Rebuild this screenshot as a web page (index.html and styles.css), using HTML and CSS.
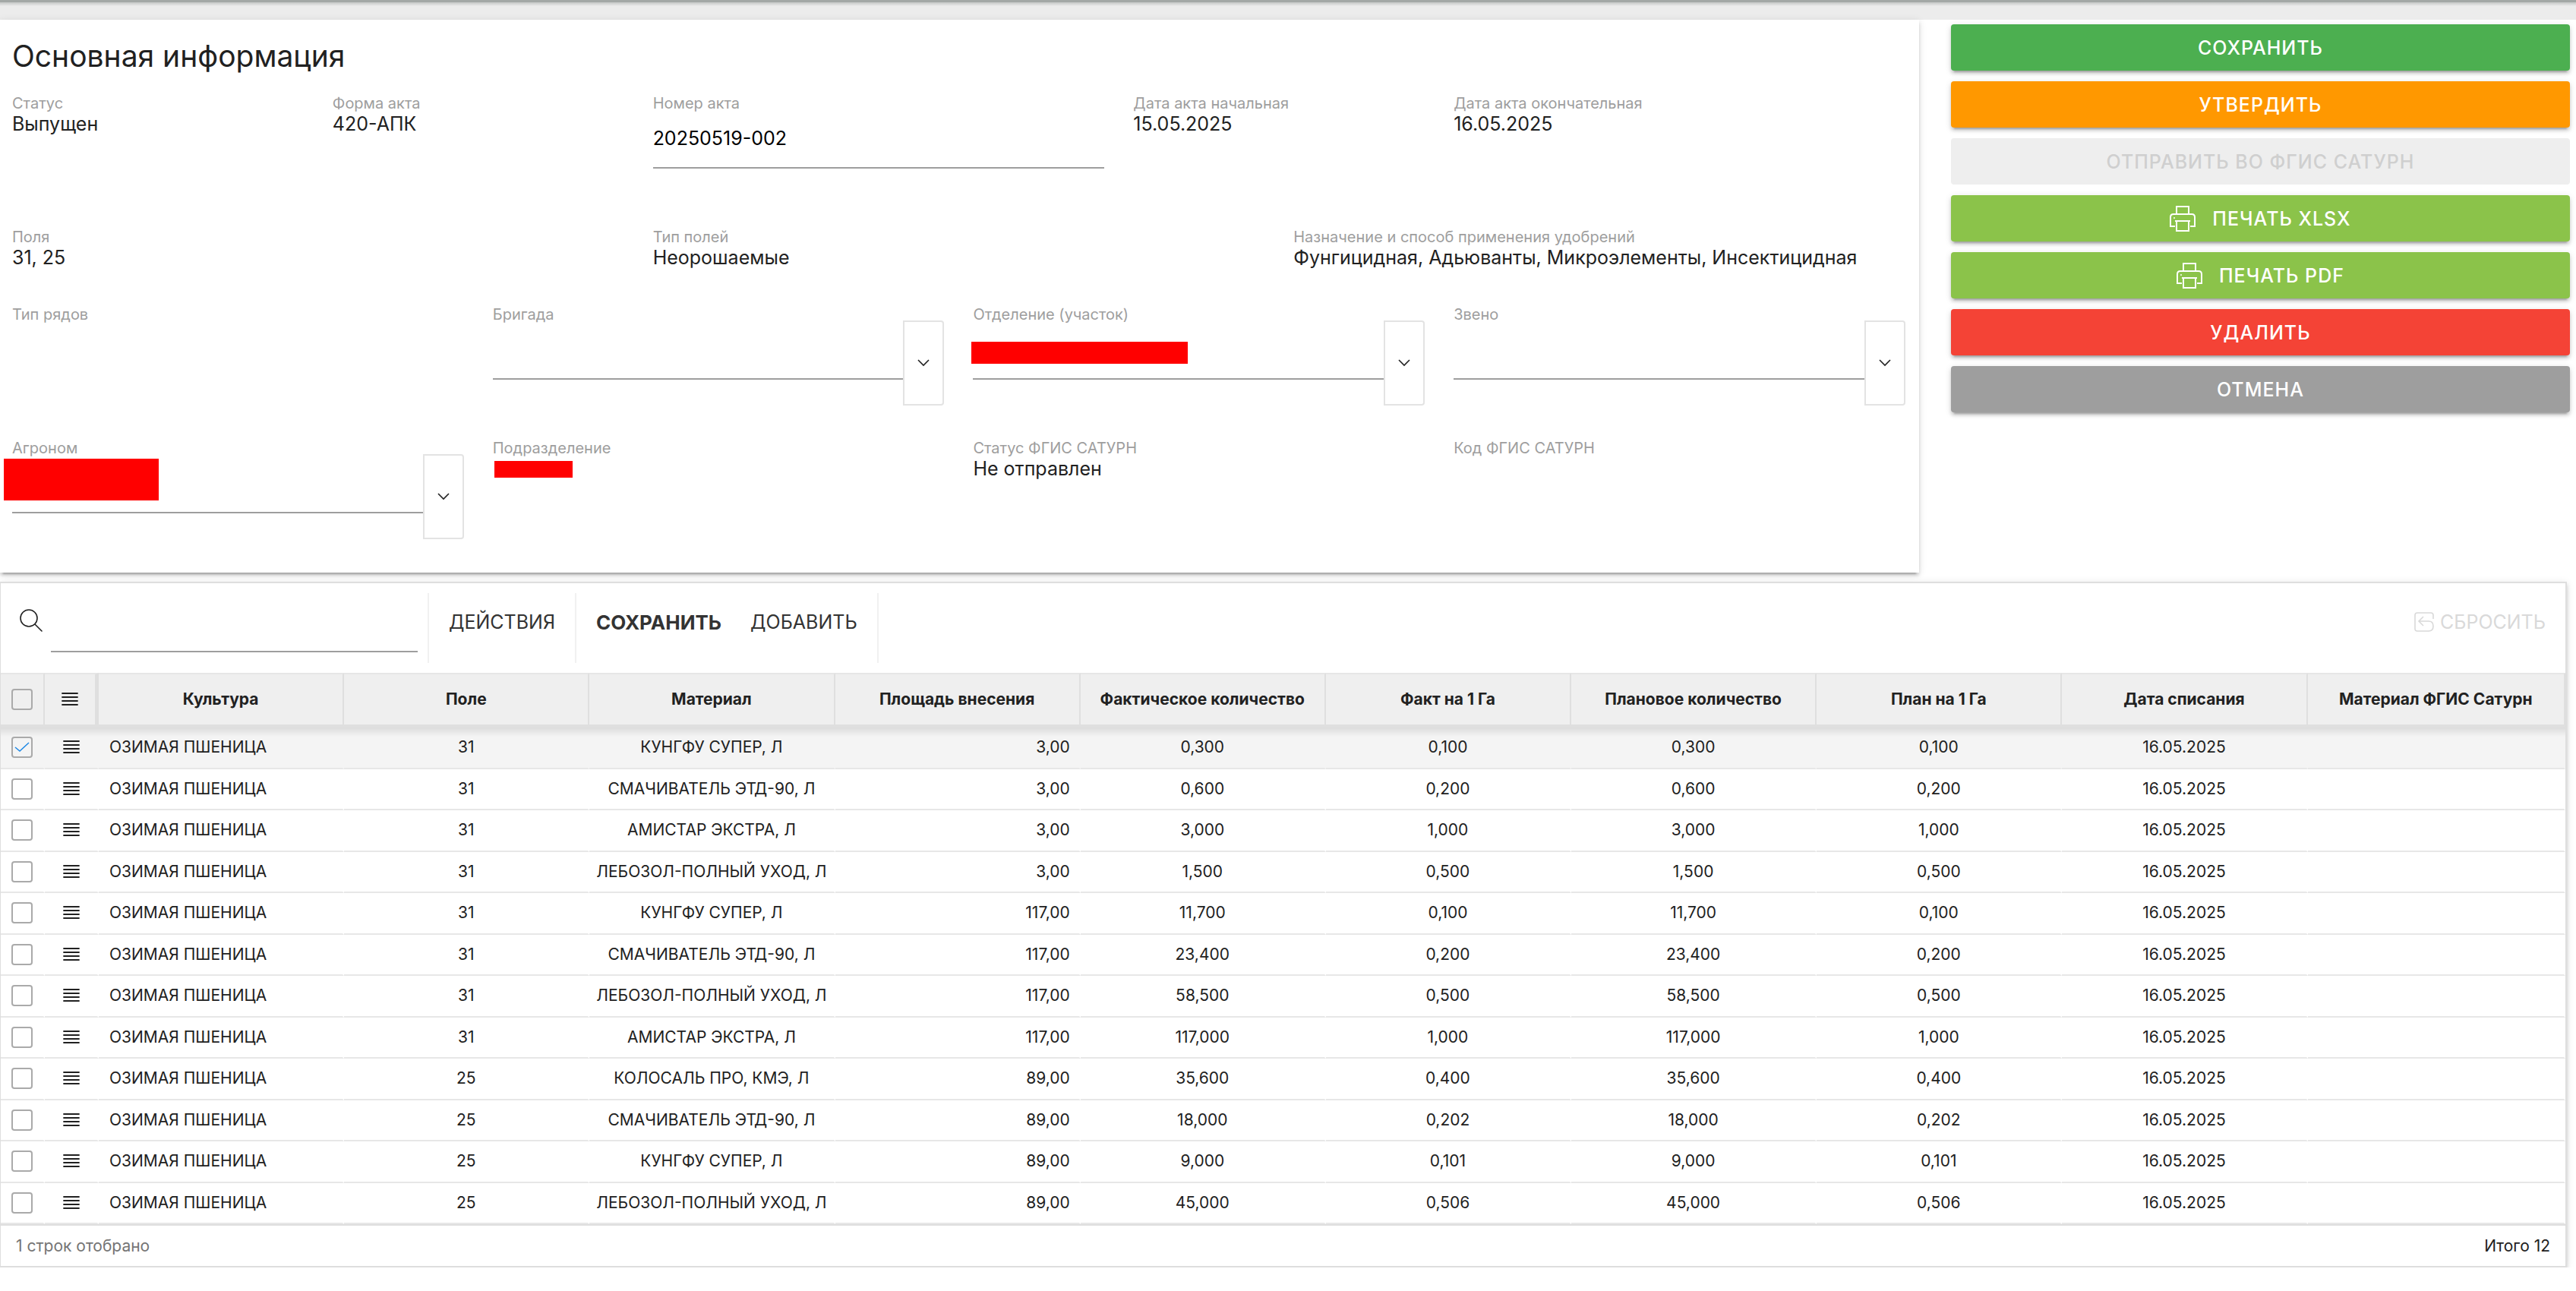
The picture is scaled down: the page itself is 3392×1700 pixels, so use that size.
FILE: index.html
```
<!DOCTYPE html>
<html lang="ru">
<head>
  <meta charset="UTF-8">
  <meta name="viewport" content="width=device-width, initial-scale=1.0">
  <title>Основная информация</title>
  <link rel="stylesheet" href="styles.css">
</head>
<body>

<!-- Иконки -->
<svg class="sprite" aria-hidden="true">
  <symbol id="icon-print" viewBox="0 0 34 34">
    <path d="M9 12V1h16v11M7 27H1V15q0-4 4-4h24q4 0 4 4v12h-6M9 20v13h16V20M7 20h20" fill="none" stroke="currentColor" stroke-width="2"/>
    <circle cx="6" cy="16" r="1" fill="currentColor"/>
  </symbol>
  <symbol id="icon-chevron" viewBox="0 0 16 10">
    <path d="M1 1l7 7 7-7" fill="none" stroke="currentColor" stroke-width="1.6"/>
  </symbol>
  <symbol id="icon-rows" viewBox="0 0 22 20">
    <path d="M1 2h20M1 7h20M1 12h20M1 17h20" fill="none" stroke="currentColor" stroke-width="1.8" stroke-linecap="round"/>
  </symbol>
  <symbol id="icon-search" viewBox="0 0 30 30">
    <path d="M20 20l9 9" stroke="currentColor" stroke-width="1.6" stroke-linecap="round"/>
    <circle cx="12" cy="12" r="11" fill="none" stroke="currentColor" stroke-width="1.6"/>
  </symbol>
  <symbol id="icon-reset" viewBox="0 0 26 26">
    <path d="M25 9V4q0-3-3-3H4Q1 1 1 4v18q0 3 3 3h15q6 0 6-6.500T19 12H7M12 6l-6 6 6 6" fill="none" stroke="currentColor" stroke-width="1.6"/>
  </symbol>
</svg>

<header class="topbar"></header>

<main>
  <div class="layout">
    <section class="card">
      <h1>Основная информация</h1>
      <form class="form">
        <div class="field col-2">
          <span class="label">Статус</span>
          <span class="value">Выпущен</span>
        </div>
        <div class="field col-2">
          <span class="label">Форма акта</span>
          <span class="value">420-АПК</span>
        </div>
        <div class="field col-3">
          <label class="label" for="act-number">Номер акта</label>
          <input class="input" type="text" id="act-number" value="20250519-002">
        </div>
        <div class="field col-2">
          <span class="label">Дата акта начальная</span>
          <span class="value">15.05.2025</span>
        </div>
        <div class="field col-3">
          <span class="label">Дата акта окончательная</span>
          <span class="value">16.05.2025</span>
        </div>

        <div class="field short col-4">
          <span class="label">Поля</span>
          <span class="value">31, 25</span>
        </div>
        <div class="field short col-4">
          <span class="label">Тип полей</span>
          <span class="value">Неорошаемые</span>
        </div>
        <div class="field short col-4">
          <span class="label">Назначение и способ применения удобрений</span>
          <span class="value">Фунгицидная, Адьюванты, Микроэлементы, Инсектицидная</span>
        </div>

        <div class="field col-3">
          <span class="label">Тип рядов</span>
        </div>
        <div class="field combo col-3">
          <label class="label" for="brigade">Бригада</label>
          <input class="input" type="text" id="brigade">
          <button class="combo-btn" type="button" aria-label="Выбрать бригаду"><svg><use href="#icon-chevron"/></svg></button>
        </div>
        <div class="field combo col-3">
          <label class="label" for="department">Отделение (участок)</label>
          <input class="input" type="text" id="department">
          <button class="combo-btn" type="button" aria-label="Выбрать отделение"><svg><use href="#icon-chevron"/></svg></button>
          <span class="mask mask-department"></span>
        </div>
        <div class="field combo col-3">
          <label class="label" for="unit">Звено</label>
          <input class="input" type="text" id="unit">
          <button class="combo-btn" type="button" aria-label="Выбрать звено"><svg><use href="#icon-chevron"/></svg></button>
        </div>

        <div class="field combo col-3">
          <label class="label" for="agronomist">Агроном</label>
          <input class="input" type="text" id="agronomist">
          <button class="combo-btn" type="button" aria-label="Выбрать агронома"><svg><use href="#icon-chevron"/></svg></button>
          <span class="mask mask-agronomist"></span>
        </div>
        <div class="field col-3">
          <span class="label">Подразделение</span>
          <span class="mask mask-division"></span>
        </div>
        <div class="field col-3">
          <span class="label">Статус ФГИС САТУРН</span>
          <span class="value">Не отправлен</span>
        </div>
        <div class="field col-3">
          <span class="label">Код ФГИС САТУРН</span>
        </div>
      </form>
    </section>

    <aside class="actions">
      <button class="btn green" type="button">СОХРАНИТЬ</button>
      <button class="btn orange" type="button">УТВЕРДИТЬ</button>
      <button class="btn" type="button" disabled>ОТПРАВИТЬ ВО ФГИС САТУРН</button>
      <button class="btn lime" type="button"><svg><use href="#icon-print"/></svg>ПЕЧАТЬ XLSX</button>
      <button class="btn lime" type="button"><svg><use href="#icon-print"/></svg>ПЕЧАТЬ PDF</button>
      <button class="btn red" type="button">УДАЛИТЬ</button>
      <button class="btn gray" type="button">ОТМЕНА</button>
    </aside>
  </div>

  <section class="grid-panel">
    <div class="toolbar">
      <div class="search">
        <label for="search" aria-label="Поиск"><svg><use href="#icon-search"/></svg></label>
        <input type="search" id="search">
      </div>
      <div class="tool-group">
        <button class="tool" type="button">ДЕЙСТВИЯ</button>
      </div>
      <div class="tool-group">
        <button class="tool strong" type="button">СОХРАНИТЬ</button>
        <button class="tool" type="button">ДОБАВИТЬ</button>
      </div>
      <button class="tool reset" type="button" disabled><svg><use href="#icon-reset"/></svg>СБРОСИТЬ</button>
    </div>

    <table>
      <colgroup>
        <col class="c-check">
        <col class="c-menu">
        <col class="c-data" span="9">
        <col>
      </colgroup>
      <thead>
        <tr>
          <th><input type="checkbox" aria-label="Выбрать все"></th>
          <th class="menu-head"><button class="row-menu" type="button" aria-label="Меню таблицы"><svg><use href="#icon-rows"/></svg></button></th>
          <th>Культура</th>
          <th>Поле</th>
          <th>Материал</th>
          <th>Площадь внесения</th>
          <th>Фактическое количество</th>
          <th>Факт на 1 Га</th>
          <th>Плановое количество</th>
          <th>План на 1 Га</th>
          <th>Дата списания</th>
          <th>Материал ФГИС Сатурн</th>
        </tr>
      </thead>
      <tbody>
        <tr class="selected">
          <td><input type="checkbox" aria-label="Строка 1" checked></td>
          <td><button class="row-menu" type="button" aria-label="Меню строки 1"><svg><use href="#icon-rows"/></svg></button></td>
          <td class="left">ОЗИМАЯ ПШЕНИЦА</td>
          <td>31</td>
          <td>КУНГФУ СУПЕР, Л</td>
          <td class="right">3,00</td>
          <td>0,300</td>
          <td>0,100</td>
          <td>0,300</td>
          <td>0,100</td>
          <td>16.05.2025</td>
          <td></td>
        </tr>
        <tr>
          <td><input type="checkbox" aria-label="Строка 2"></td>
          <td><button class="row-menu" type="button" aria-label="Меню строки 2"><svg><use href="#icon-rows"/></svg></button></td>
          <td class="left">ОЗИМАЯ ПШЕНИЦА</td>
          <td>31</td>
          <td>СМАЧИВАТЕЛЬ ЭТД-90, Л</td>
          <td class="right">3,00</td>
          <td>0,600</td>
          <td>0,200</td>
          <td>0,600</td>
          <td>0,200</td>
          <td>16.05.2025</td>
          <td></td>
        </tr>
        <tr>
          <td><input type="checkbox" aria-label="Строка 3"></td>
          <td><button class="row-menu" type="button" aria-label="Меню строки 3"><svg><use href="#icon-rows"/></svg></button></td>
          <td class="left">ОЗИМАЯ ПШЕНИЦА</td>
          <td>31</td>
          <td>АМИСТАР ЭКСТРА, Л</td>
          <td class="right">3,00</td>
          <td>3,000</td>
          <td>1,000</td>
          <td>3,000</td>
          <td>1,000</td>
          <td>16.05.2025</td>
          <td></td>
        </tr>
        <tr>
          <td><input type="checkbox" aria-label="Строка 4"></td>
          <td><button class="row-menu" type="button" aria-label="Меню строки 4"><svg><use href="#icon-rows"/></svg></button></td>
          <td class="left">ОЗИМАЯ ПШЕНИЦА</td>
          <td>31</td>
          <td>ЛЕБОЗОЛ-ПОЛНЫЙ УХОД, Л</td>
          <td class="right">3,00</td>
          <td>1,500</td>
          <td>0,500</td>
          <td>1,500</td>
          <td>0,500</td>
          <td>16.05.2025</td>
          <td></td>
        </tr>
        <tr>
          <td><input type="checkbox" aria-label="Строка 5"></td>
          <td><button class="row-menu" type="button" aria-label="Меню строки 5"><svg><use href="#icon-rows"/></svg></button></td>
          <td class="left">ОЗИМАЯ ПШЕНИЦА</td>
          <td>31</td>
          <td>КУНГФУ СУПЕР, Л</td>
          <td class="right">117,00</td>
          <td>11,700</td>
          <td>0,100</td>
          <td>11,700</td>
          <td>0,100</td>
          <td>16.05.2025</td>
          <td></td>
        </tr>
        <tr>
          <td><input type="checkbox" aria-label="Строка 6"></td>
          <td><button class="row-menu" type="button" aria-label="Меню строки 6"><svg><use href="#icon-rows"/></svg></button></td>
          <td class="left">ОЗИМАЯ ПШЕНИЦА</td>
          <td>31</td>
          <td>СМАЧИВАТЕЛЬ ЭТД-90, Л</td>
          <td class="right">117,00</td>
          <td>23,400</td>
          <td>0,200</td>
          <td>23,400</td>
          <td>0,200</td>
          <td>16.05.2025</td>
          <td></td>
        </tr>
        <tr>
          <td><input type="checkbox" aria-label="Строка 7"></td>
          <td><button class="row-menu" type="button" aria-label="Меню строки 7"><svg><use href="#icon-rows"/></svg></button></td>
          <td class="left">ОЗИМАЯ ПШЕНИЦА</td>
          <td>31</td>
          <td>ЛЕБОЗОЛ-ПОЛНЫЙ УХОД, Л</td>
          <td class="right">117,00</td>
          <td>58,500</td>
          <td>0,500</td>
          <td>58,500</td>
          <td>0,500</td>
          <td>16.05.2025</td>
          <td></td>
        </tr>
        <tr>
          <td><input type="checkbox" aria-label="Строка 8"></td>
          <td><button class="row-menu" type="button" aria-label="Меню строки 8"><svg><use href="#icon-rows"/></svg></button></td>
          <td class="left">ОЗИМАЯ ПШЕНИЦА</td>
          <td>31</td>
          <td>АМИСТАР ЭКСТРА, Л</td>
          <td class="right">117,00</td>
          <td>117,000</td>
          <td>1,000</td>
          <td>117,000</td>
          <td>1,000</td>
          <td>16.05.2025</td>
          <td></td>
        </tr>
        <tr>
          <td><input type="checkbox" aria-label="Строка 9"></td>
          <td><button class="row-menu" type="button" aria-label="Меню строки 9"><svg><use href="#icon-rows"/></svg></button></td>
          <td class="left">ОЗИМАЯ ПШЕНИЦА</td>
          <td>25</td>
          <td>КОЛОСАЛЬ ПРО, КМЭ, Л</td>
          <td class="right">89,00</td>
          <td>35,600</td>
          <td>0,400</td>
          <td>35,600</td>
          <td>0,400</td>
          <td>16.05.2025</td>
          <td></td>
        </tr>
        <tr>
          <td><input type="checkbox" aria-label="Строка 10"></td>
          <td><button class="row-menu" type="button" aria-label="Меню строки 10"><svg><use href="#icon-rows"/></svg></button></td>
          <td class="left">ОЗИМАЯ ПШЕНИЦА</td>
          <td>25</td>
          <td>СМАЧИВАТЕЛЬ ЭТД-90, Л</td>
          <td class="right">89,00</td>
          <td>18,000</td>
          <td>0,202</td>
          <td>18,000</td>
          <td>0,202</td>
          <td>16.05.2025</td>
          <td></td>
        </tr>
        <tr>
          <td><input type="checkbox" aria-label="Строка 11"></td>
          <td><button class="row-menu" type="button" aria-label="Меню строки 11"><svg><use href="#icon-rows"/></svg></button></td>
          <td class="left">ОЗИМАЯ ПШЕНИЦА</td>
          <td>25</td>
          <td>КУНГФУ СУПЕР, Л</td>
          <td class="right">89,00</td>
          <td>9,000</td>
          <td>0,101</td>
          <td>9,000</td>
          <td>0,101</td>
          <td>16.05.2025</td>
          <td></td>
        </tr>
        <tr>
          <td><input type="checkbox" aria-label="Строка 12"></td>
          <td><button class="row-menu" type="button" aria-label="Меню строки 12"><svg><use href="#icon-rows"/></svg></button></td>
          <td class="left">ОЗИМАЯ ПШЕНИЦА</td>
          <td>25</td>
          <td>ЛЕБОЗОЛ-ПОЛНЫЙ УХОД, Л</td>
          <td class="right">89,00</td>
          <td>45,000</td>
          <td>0,506</td>
          <td>45,000</td>
          <td>0,506</td>
          <td>16.05.2025</td>
          <td></td>
        </tr>
      </tbody>
    </table>

    <footer class="grid-footer">
      <span class="muted">1 строк отобрано</span>
      <span>Итого 12</span>
    </footer>
  </section>
</main>

</body>
</html>
```
FILE: styles.css
```
* {
  box-sizing: border-box;
}

body {
  margin: 0;
  font-family: Inter, "Liberation Sans", sans-serif;
  font-size: 21px;
  color: #212121;
  background-color: #fff;
}

button, input {
  font-family: inherit;
  color: inherit;
}

button {
  cursor: pointer;
}

.sprite {
  display: none;
}

/* Верхняя полоса */
.topbar {
  height: 26px;
  border-top: 3px solid #a3a8a6;
  background: linear-gradient(#c4c6c5, #ececec 5px);
}

/* Карточка и кнопки */
.layout {
  display: grid;
  grid-template-columns: 31fr 10fr;
  gap: 42px;
  padding-right: 8px;
}

.card, .grid-panel {
  background-color: #fff;
  box-shadow: 0 6px 2px -4px rgba(0, 0, 0, 0.2), 0 4px 4px rgba(0, 0, 0, 0.14), 0 2px 10px rgba(0, 0, 0, 0.12);
}

.card {
  padding: 18px 18px 0 16px;
}

h1 {
  margin: 0 0 20px;
  font-size: 39px;
  font-weight: 400;
  line-height: 60px;
}

.form {
  display: grid;
  grid-template-columns: repeat(12, 1fr);
  column-gap: 38px;
}

.field {
  position: relative;
  display: flex;
  flex-direction: column;
  min-height: 176px;
}

.field.short {
  min-height: 102px;
}

.col-2 { grid-column: span 2; }
.col-3 { grid-column: span 3; }
.col-4 { grid-column: span 4; }

.label {
  font-size: 20px;
  line-height: 24px;
  color: #9e9e9e;
  white-space: nowrap;
}

.value {
  font-size: 25px;
  line-height: 30px;
  white-space: nowrap;
}

.input {
  width: 100%;
  height: 74px;
  padding: 0 0 4px;
  border: none;
  border-bottom: 2px solid #9e9e9e;
  background: none;
  font-size: 25px;
  color: #000;
  outline: none;
}

.combo {
  display: grid;
  grid-template-columns: 1fr 54px;
  grid-template-rows: 24px 74px 34px;
}

.combo-btn {
  grid-column: 2;
  grid-row: 1 / 4;
  margin-top: 20px;
  padding: 0;
  border: 2px solid #e3e3e3;
  border-radius: 0 4px 4px 0;
  background-color: #fff;
}

.combo-btn svg {
  width: 16px;
  height: 10px;
}

/* Скрытые данные */
.mask {
  background-color: #f00;
}

.mask-department {
  position: absolute;
  top: 48px;
  left: -2px;
  width: 285px;
  height: 29px;
}

.mask-agronomist {
  position: absolute;
  top: 26px;
  left: -11px;
  width: 204px;
  height: 55px;
}

.mask-division {
  width: 103px;
  height: 22px;
  margin: 5px 2px;
}

.actions {
  display: flex;
  flex-direction: column;
  gap: 14px;
  padding-top: 6px;
}

.btn {
  display: flex;
  align-items: center;
  justify-content: center;
  gap: 22px;
  height: 61px;
  border: none;
  border-radius: 4px;
  color: #fff;
  font-size: 25px;
  font-weight: 500;
  letter-spacing: 1px;
  box-shadow: 0 6px 2px -4px rgba(0, 0, 0, 0.2), 0 4px 4px rgba(0, 0, 0, 0.14), 0 2px 10px rgba(0, 0, 0, 0.12);
}

.btn svg {
  width: 34px;
  height: 34px;
}

.btn:disabled {
  background-color: #eee;
  color: #cfcfcf;
  box-shadow: none;
  cursor: default;
}

.green { background-color: #4caf50; }
.orange { background-color: #ff9800; }
.lime { background-color: #8bc34a; }
.red { background-color: #f44336; }
.gray { background-color: #9e9e9e; }

/* Таблица */
.grid-panel {
  margin: 12px 12px 0 0;
  border: 2px solid #dedede;
  border-left-width: 1px;
}

.toolbar {
  display: flex;
  align-items: center;
  height: 118px;
  padding-right: 26px;
}

.search {
  display: flex;
  align-items: center;
  width: 562px;
  padding: 0 0 20px 25px;
}

.search svg {
  display: block;
  width: 30px;
  height: 30px;
}

.search input {
  width: 483px;
  height: 84px;
  margin-left: 11px;
  padding: 0;
  border: none;
  border-bottom: 2px solid #9e9e9e;
  background: none;
  font-size: 25px;
  outline: none;
  appearance: none;
}

.tool-group {
  display: flex;
  align-items: center;
  gap: 38px;
  height: 92px;
  padding: 0 26px 16px;
  border-left: 2px solid #f1f1f1;
}

.tool-group + .tool-group {
  border-right: 2px solid #f1f1f1;
}

.tool {
  display: flex;
  align-items: center;
  gap: 8px;
  padding: 0;
  border: none;
  background: none;
  font-size: 25px;
  color: #333;
}

.tool.strong {
  font-size: 26px;
  font-weight: 700;
}

.tool.reset {
  margin-left: auto;
  padding-bottom: 16px;
  color: #d9d9d9;
}

.tool.reset svg {
  width: 26px;
  height: 26px;
}

table {
  width: 100%;
  height: 726px;
  table-layout: fixed;
  border-collapse: separate;
  border-spacing: 0;
}

.c-check { width: 58px; }
.c-menu { width: 71px; }
.c-data { width: 9.57%; }

th, td {
  padding: 0;
  text-align: center;
  white-space: nowrap;
  line-height: 24px;
}

th {
  height: 72px;
  border-top: 2px solid #e6e6e6;
  border-right: 2px solid #dfdfdf;
  border-bottom: 4px solid #dfdfdf;
  background-color: #efefef;
  font-weight: 700;
}

.menu-head {
  border-right-width: 5px;
}

td {
  height: 54px;
  border-right: 2px solid transparent;
  border-bottom: 2px solid #e7e7e7;
}

.selected td {
  background-color: #f4f4f4;
}

/* Тень под шапкой */
tbody tr:first-child td {
  background-image: linear-gradient(#dcdcdc, #f4f4f4 12px);
}

.left {
  padding-left: 14px;
  text-align: left;
}

.right {
  padding-right: 12px;
  text-align: right;
}

input[type="checkbox"] {
  appearance: none;
  display: block;
  width: 28px;
  height: 28px;
  margin: 0 0 0 14px;
  border: 2px solid #aaa;
  border-radius: 4px;
  background-color: #fff;
}

th input[type="checkbox"] {
  background: none;
}

input[type="checkbox"]:checked {
  background-color: transparent;
  background-image: url("data:image/svg+xml,%3Csvg xmlns='http://www.w3.org/2000/svg' viewBox='0 0 24 24'%3E%3Cpath d='M3 12l6 5L21 6' fill='none' stroke='%231e88e5' stroke-width='1.500'/%3E%3C/svg%3E");
}

.row-menu {
  display: block;
  margin: 0 auto;
  padding: 0;
  border: none;
  background: none;
}

.row-menu svg {
  display: block;
  width: 22px;
  height: 20px;
}

.grid-footer {
  display: flex;
  justify-content: space-between;
  align-items: center;
  height: 55px;
  padding: 0 20px;
  border-top: 2px solid #dedede;
}

.muted {
  color: #757575;
}
```
